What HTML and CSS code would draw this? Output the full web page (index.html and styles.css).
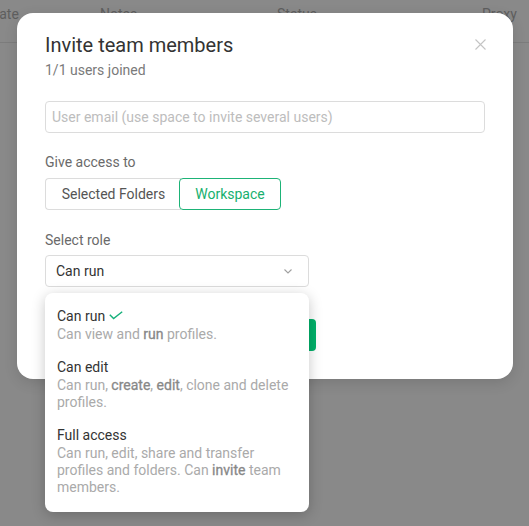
FILE: index.html
```html
<!DOCTYPE html>
<html>
<head>
<meta charset="utf-8">
<link rel="stylesheet" href="styles.css">
</head>
<body>
<div class="page">
  <div class="table-head">
    <span class="col c-date">Date</span>
    <span class="col c-notes">Notes</span>
    <span class="col c-status">Status</span>
    <span class="col c-proxy">Proxy</span>
  </div>

  <div class="modal">
    <button class="close" aria-label="Close">
      <svg width="11" height="11" viewBox="0 0 11 11"><path d="M0.5 0.5 L10.5 10.5 M10.5 0.5 L0.5 10.5" stroke="#c4c4c4" stroke-width="1.1" fill="none"/></svg>
    </button>
    <h1 class="title">Invite team members</h1>
    <p class="sub">1/1 users joined</p>
    <input class="email" type="text" placeholder="User email (use space to invite several users)">

    <div class="label">Give access to</div>
    <div class="seg">
      <button class="seg-btn">Selected Folders</button>
      <button class="seg-btn active">Workspace</button>
    </div>

    <div class="label">Select role</div>
    <div class="select-wrap">
      <div class="select">
        <span>Can run</span>
        <svg class="chev" width="8" height="5" viewBox="0 0 8 5"><path d="M0.5 0.5 L4 4 L7.5 0.5" stroke="#a0a0a0" stroke-width="1.1" fill="none"/></svg>
      </div>
      <div class="menu">
        <div class="item">
          <div class="item-title">Can run <svg class="check" width="14" height="9" viewBox="0 0 14 9"><path d="M0.8 3.8 L4.6 7.6 L13.2 0.8" stroke="#14b07a" stroke-width="1.4" fill="none"/></svg></div>
          <div class="item-desc">Can view and <b>run</b> profiles.</div>
        </div>
        <div class="item">
          <div class="item-title">Can edit</div>
          <div class="item-desc">Can run, <b>create</b>, <b>edit</b>, clone and delete profiles.</div>
        </div>
        <div class="item">
          <div class="item-title">Full access</div>
          <div class="item-desc">Can run, edit, share and transfer profiles and folders. Can <b>invite</b> team members.</div>
        </div>
      </div>
    </div>

    <div class="actions">
      <button class="primary">Invite</button>
    </div>
  </div>
</div>
</body>
</html>
```

FILE: styles.css
```css
* { box-sizing: border-box; }

html, body {
  margin: 0;
  padding: 0;
}

body {
  background: #898989;
  font-family: Roboto, "Liberation Sans", sans-serif;
  font-size: 14px;
  width: 529px;
  height: 526px;
  overflow: hidden;
}

.page {
  position: relative;
  width: 529px;
  height: 526px;
}

.table-head {
  display: flex;
  height: 43px;
  padding-top: 4px;
  margin-left: -10px;
  border-bottom: 1px solid #7c7c7c;
  color: #5e5e5e;
  line-height: 20px;
  white-space: nowrap;
}

.c-date { width: 110px; flex: none; }
.c-notes { width: 177px; flex: none; }
.c-status { width: 205px; flex: none; }
.c-proxy { width: 60px; flex: none; }

.modal {
  position: absolute;
  left: 17px;
  top: 13px;
  width: 496px;
  background: #fff;
  border-radius: 16px;
  padding: 20px 28px 28px;
  box-shadow: 0 4px 14px rgba(0, 0, 0, 0.12);
}

.close {
  position: absolute;
  right: 26px;
  top: 25px;
  width: 13px;
  height: 13px;
  padding: 1px;
  border: 0;
  background: none;
  display: flex;
}

.title {
  margin: 0;
  font-size: 20px;
  font-weight: 400;
  line-height: 24px;
  color: #333;
}

.sub {
  margin: 3px 0 0;
  line-height: 20px;
  color: #7a7a7a;
}

.email {
  display: block;
  margin-top: 21px;
  width: 440px;
  height: 32px;
  border: 1px solid #dcdcdc;
  border-radius: 4px;
  padding: 0 6px;
  font-family: Roboto, "Liberation Sans", sans-serif;
  font-size: 14px;
  color: #333;
  outline: none;
}

.email::placeholder { color: #bdbdbd; }

.label {
  line-height: 20px;
  color: #6a6a6a;
  margin-top: 19px;
}

.seg {
  display: flex;
  margin-top: 6px;
}

.seg-btn {
  height: 32px;
  padding: 0;
  border: 1px solid #dcdcdc;
  background: #fff;
  font-family: Roboto, "Liberation Sans", sans-serif;
  font-size: 14px;
  color: #555;
  white-space: nowrap;
  text-align: center;
}

.seg-btn:first-child {
  width: 136px;
  border-radius: 4px 0 0 4px;
  border-right: 0;
}

.seg-btn.active {
  width: 102px;
  border-color: #1db377;
  color: #17b06e;
  border-radius: 4px;
  margin-left: -2px;
}

.seg + .label { margin-top: 20px; }

.select-wrap {
  position: relative;
  margin-top: 5px;
  width: 264px;
}

.select {
  height: 32px;
  border: 1px solid #dcdcdc;
  border-radius: 4px;
  padding: 0 16px 0 10px;
  display: flex;
  align-items: center;
  justify-content: space-between;
  color: #333;
}

.chev { margin-top: 1px; }

.menu {
  position: absolute;
  left: 0;
  top: calc(100% + 6px);
  width: 264px;
  background: #fff;
  border-radius: 8px;
  padding: 6px 0 9px;
  box-shadow: 0 3px 14px rgba(0, 0, 0, 0.22);
  z-index: 2;
}

.item {
  padding: 7px 16px 7px 12px;
}

.item-title {
  line-height: 20px;
  color: #333;
  display: flex;
  align-items: center;
  gap: 4px;
}

.check { margin-top: -2px; }

.item-desc {
  line-height: 17px;
  color: #aaa;
}

.item-desc b {
  font-weight: 400;
  color: #888;
  -webkit-text-stroke: 0.3px #888;
}

.actions {
  margin-top: 32px;
  display: flex;
}

.primary {
  width: 271px;
  height: 32px;
  border: 0;
  border-radius: 4px;
  background: #00b16a;
  color: #fff;
  font-family: Roboto, "Liberation Sans", sans-serif;
  font-size: 14px;
}
```
